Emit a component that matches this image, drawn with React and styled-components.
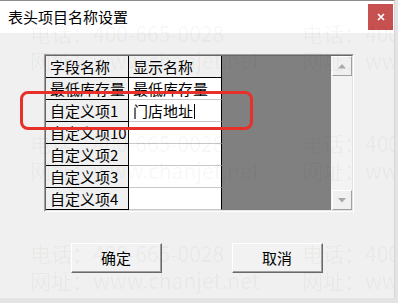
import React from 'react'
import styled, { createGlobalStyle } from 'styled-components'

const GlobalStyle = createGlobalStyle`
  html, body {
    margin: 0;
    padding: 0;
    background: #e4e4e4;
  }
  * {
    box-sizing: border-box;
  }
`

const FONT = `"Noto Sans CJK SC", "Noto Sans", sans-serif`

const Window = styled.div`
  position: relative;
  width: 395px;
  height: 298px;
  background: #f0f0f0;
  border-top: 1px solid #8c8c8c;
  border-right: 1px solid #d6d6d6;
  overflow: hidden;
  font-family: ${FONT};
  display: flex;
  flex-direction: column;
`

const TitleBar = styled.div`
  height: 32px;
  background: #fff;
  display: flex;
  align-items: flex-start;
  justify-content: space-between;
  padding-left: 8px;
`

const Title = styled.span`
  font-size: 15px;
  line-height: 32px;
  color: #000;
`

const CloseButton = styled.div`
  width: 25px;
  height: 26px;
  margin-top: 3px;
  margin-right: 1px;
  background: #c75050;
  display: flex;
  align-items: center;
  justify-content: center;
`

const Body = styled.div`
  flex: 1;
  display: flex;
  flex-direction: column;
  padding-top: 21px;
`

const GridFrame = styled.div`
  margin-left: 44px;
  width: 310px;
  height: 158px;
  border-style: solid;
  border-width: 1px;
  border-color: #a0a0a0 #fff #fff #a0a0a0;
`

const GridInner = styled.div`
  height: 100%;
  border-style: solid;
  border-width: 1px;
  border-color: #696969 #e3e3e3 #e3e3e3 #696969;
  background: #808080;
  display: flex;
`

const Table = styled.div`
  width: 176px;
  display: flex;
  flex-direction: column;
`

const Row = styled.div`
  display: flex;
  height: 22px;
`

const Cell = styled.div`
  width: ${p => (p.$fixed ? 83 : 93)}px;
  height: 22px;
  padding-left: 4px;
  font-size: 15px;
  line-height: 21px;
  color: #000;
  white-space: nowrap;
  overflow: hidden;
  background: ${p => (p.$fixed || p.$header ? '#f0f0f0' : '#fff')};
  border-right: 1px solid #000;
  border-bottom: 1px solid ${p => (p.$fixed || p.$header ? '#000' : '#c8c8c8')};
`

const Caret = styled.span`
  display: inline-block;
  width: 1px;
  height: 15px;
  background: #000;
  vertical-align: -2px;
  margin-left: 1px;
`

const Empty = styled.div`
  flex: 1;
`

const ScrollBar = styled.div`
  width: 21px;
  background: #f3f3f3;
  display: flex;
  flex-direction: column;
  justify-content: space-between;
  padding-left: 1px;
`

const ArrowButton = styled.div`
  width: 20px;
  height: 20px;
  background: #f0f0f0;
  border-style: solid;
  border-width: 1px;
  border-color: #fff #a0a0a0 #a0a0a0 #fff;
  display: flex;
  align-items: center;
  justify-content: center;
`

const ButtonRow = styled.div`
  display: flex;
  justify-content: center;
  gap: 70px;
  margin-top: 31px;
  padding-right: 1px;
`

const Button = styled.div`
  width: 91px;
  height: 30px;
  background: #f2f2f2;
  border-style: solid;
  border-width: 1px;
  border-color: #fff #696969 #696969 #fff;
  box-shadow: inset -1px -1px 0 #a0a0a0;
  font-size: 15px;
  line-height: 28px;
  text-align: center;
  color: #000;
`

const Highlight = styled.div`
  position: absolute;
  left: 20px;
  top: 90px;
  width: 233px;
  height: 39px;
  border: 3px solid #e8302b;
  border-radius: 8px;
  pointer-events: none;
`

const Watermark = styled.div`
  position: absolute;
  inset: 0;
  pointer-events: none;
  display: grid;
  grid-template-columns: repeat(2, 272px);
  grid-auto-rows: 110px;
  padding: 19px 0 0 30px;
  overflow: hidden;
`

const Mark = styled.div`
  font-size: 21px;
  line-height: 27px;
  white-space: nowrap;
  color: rgba(0, 0, 0, 0.045);
  font-family: ${FONT};
`

const rows = [
  ['字段名称', '显示名称', true],
  ['最低库存量', '最低库存量'],
  ['自定义项1', '门店地址', false, true],
  ['自定义项10', ''],
  ['自定义项2', ''],
  ['自定义项3', ''],
  ['自定义项4', ''],
]

const Triangle = ({ down }) => (
  <svg width="8" height="5" viewBox="0 0 8 5">
    <path d={down ? 'M0 0H8L4 4.5Z' : 'M0 4.5H8L4 0Z'} fill="#a8a8a8" />
  </svg>
)

export default function App() {
  return (
    <>
      <GlobalStyle />
      <Window>
        <TitleBar>
          <Title>表头项目名称设置</Title>
          <CloseButton>
            <svg width="8" height="8" viewBox="0 0 8 8">
              <path d="M1 1L7 7M7 1L1 7" stroke="#fff" strokeWidth="1.7" />
            </svg>
          </CloseButton>
        </TitleBar>
        <Body>
          <GridFrame>
            <GridInner>
              <Table>
                {rows.map(([name, label, header, editing]) => (
                  <Row key={name}>
                    <Cell $fixed>{name}</Cell>
                    <Cell $header={header}>
                      {label}
                      {editing && <Caret />}
                    </Cell>
                  </Row>
                ))}
              </Table>
              <Empty />
              <ScrollBar>
                <ArrowButton><Triangle /></ArrowButton>
                <ArrowButton><Triangle down /></ArrowButton>
              </ScrollBar>
            </GridInner>
          </GridFrame>
          <ButtonRow>
            <Button>确定</Button>
            <Button>取消</Button>
          </ButtonRow>
        </Body>
        <Highlight />
        <Watermark>
          {Array.from({ length: 6 }).map((_, i) => (
            <div key={i}>
              <Mark>电话：400-665-0028</Mark>
              <Mark>网址：www.chanjet.net</Mark>
            </div>
          ))}
        </Watermark>
      </Window>
    </>
  )
}
